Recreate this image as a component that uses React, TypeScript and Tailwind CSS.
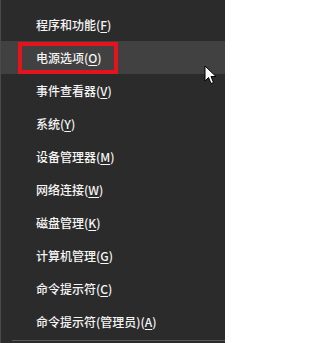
import React from "react";

const items: [string, string, string][] = [
  ["程序和功能(", "F", ")"],
  ["电源选项(", "O", ")"],
  ["事件查看器(", "V", ")"],
  ["系统(", "Y", ")"],
  ["设备管理器(", "M", ")"],
  ["网络连接(", "W", ")"],
  ["磁盘管理(", "K", ")"],
  ["计算机管理(", "G", ")"],
  ["命令提示符(", "C", ")"],
  ["命令提示符(管理员)(", "A", ")"],
];

export default function App() {
  return (
    <div
      className="relative w-[225px] h-[343px] overflow-hidden bg-[#2b2b2b] border-l border-[#4a4a4a] text-[12px] text-[#f5f5f5]"
      style={{ fontFamily: '"Noto Sans CJK SC", "Noto Sans", sans-serif' }}
    >
      <div className="flex flex-col pt-[8px]">
        {items.map(([a, k, b], i) => (
          <div
            key={i}
            className={`relative flex items-center h-[33px] pl-[35px] ${i === 1 ? "bg-[#414141]" : ""}`}
          >
            <span className="leading-none font-medium">
              {a}
              <span className="underline underline-offset-2">{k}</span>
              {b}
            </span>
            {i === 1 && (
              <div className="absolute left-[17px] top-[1px] w-[100px] h-[32px] border-[4px] border-[#e5131c]" />
            )}
          </div>
        ))}
      </div>
      <div className="absolute left-[11px] right-0 bottom-[2px] h-px bg-[#5a5a5a]" />
      <svg
        className="absolute left-[203px] top-[65px]"
        width="14"
        height="20"
        viewBox="0 0 14 20"
      >
        <path
          d="M1 1 L1 16 L4.5 12.5 L7 18.5 L9.5 17.5 L7 11.5 L12 11.5 Z"
          fill="#ffffff"
          stroke="#000000"
          strokeWidth="1"
          strokeLinejoin="miter"
        />
      </svg>
    </div>
  );
}
